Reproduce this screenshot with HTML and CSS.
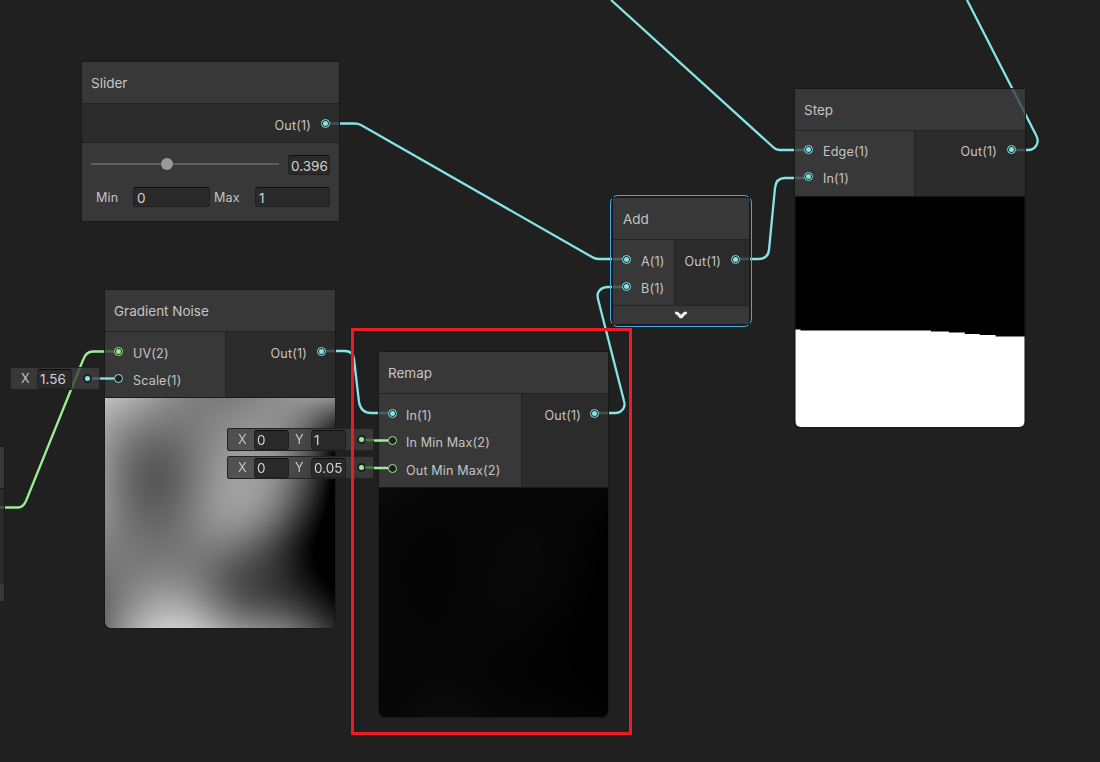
FILE: index.html
```
<!DOCTYPE html>
<html lang="en">
<head>
    <meta charset="UTF-8">
    <title>Shader Graph</title>
    <meta name="viewport" content="width=device-width, initial-scale=1.0">
    <link rel="stylesheet" href="styles.css">
</head>
<body>
    <div class="graph">
        <!-- edges, drawn under the nodes -->
        <svg class="edges" width="1100" height="762">
            <g class="edge">
                <path d="M326 123.500 H355 Q358 123.500 361 125 L592 257 Q595 259 599 259 H627"/>
                <path d="M611 0 L773 147 Q776 150 780 150 H809"/>
                <path d="M735 259 H758 Q768 259 769 250 L775 188 Q776 178 785 178 H809"/>
                <path d="M967 0 L1036 135 C1040 142 1036 150 1028 150 H1011"/>
                <path d="M321 351 H345 Q353 351 354 359 L359 402 Q361 413 371 413 H392"/>
                <path d="M595 413 H615 C622 413 626 407 624 401 L598 299 C596 292 601 287 608 287 H627"/>
            </g>
            <g class="edge green">
                <path d="M0 507.500 H18 Q23 507.500 26 501 L83 360 Q86 351.500 93 351.500 H118"/>
            </g>
        </svg>

        <div class="node node-cut">
            <div class="title"></div>
            <div class="outputs"></div>
            <div class="footer"></div>
        </div>

        <div class="node node-slider">
            <div class="title">Slider</div>
            <div class="ports">
                <div class="outputs">
                    <div class="port">Out(1)<i class="dot on"></i></div>
                </div>
            </div>
            <div class="controls">
                <div class="slider-row">
                    <div class="track"><span class="thumb"></span></div>
                    <div class="field">0.396</div>
                </div>
                <div class="range-row">
                    <label>Min</label><div class="field">0</div>
                    <label>Max</label><div class="field">1</div>
                </div>
            </div>
        </div>

        <div class="node node-noise">
            <div class="title">Gradient Noise</div>
            <div class="ports">
                <div class="inputs">
                    <div class="port"><i class="dot on green"></i>UV(2)</div>
                    <div class="port"><i class="dot"></i>Scale(1)</div>
                </div>
                <div class="outputs">
                    <div class="port">Out(1)<i class="dot on"></i></div>
                </div>
            </div>
            <canvas class="preview" id="noisePreview" width="230" height="230"></canvas>
        </div>

        <div class="node node-remap">
            <div class="title">Remap</div>
            <div class="ports">
                <div class="inputs">
                    <div class="port"><i class="dot on"></i>In(1)</div>
                    <div class="port"><i class="dot green"></i>In Min Max(2)</div>
                    <div class="port"><i class="dot green"></i>Out Min Max(2)</div>
                </div>
                <div class="outputs">
                    <div class="port">Out(1)<i class="dot on"></i></div>
                </div>
            </div>
            <canvas class="preview" id="remapPreview" width="230" height="230"></canvas>
        </div>

        <div class="selection">
            <div class="node node-add">
                <div class="title">Add</div>
                <div class="ports">
                    <div class="inputs">
                        <div class="port"><i class="dot on"></i>A(1)</div>
                        <div class="port"><i class="dot on"></i>B(1)</div>
                    </div>
                    <div class="outputs">
                        <div class="port">Out(1)<i class="dot on"></i></div>
                    </div>
                </div>
                <div class="footer">
                    <svg width="14" height="8" viewBox="0 0 14 8"><path d="M1 0.800 H3.800 L7 3.800 L10.200 0.800 H13 V2.800 L11 4 L8.200 7.200 H5.800 L3 4 L1 2.800 Z"/></svg>
                </div>
            </div>
        </div>

        <div class="node node-step">
            <div class="title">Step</div>
            <div class="ports">
                <div class="inputs">
                    <div class="port"><i class="dot on"></i>Edge(1)</div>
                    <div class="port"><i class="dot on"></i>In(1)</div>
                </div>
                <div class="outputs">
                    <div class="port">Out(1)<i class="dot on"></i></div>
                </div>
            </div>
            <svg class="preview" width="230" height="231" viewBox="0 0 230 231">
                <rect width="230" height="231" fill="#000"/>
                <path fill="#fff" d="M0 133 H5 V134 H136 V135 H154 V136 H170 V137.500 H185 V138.500 H201 V140 H230 V231 H0 Z"/>
            </svg>
        </div>

        <!-- default values for unconnected inputs -->
        <div class="value value-scale">
            <span>X</span><div class="field">1.56</div><i class="pin"></i>
        </div>
        <div class="value value-in">
            <span>X</span><div class="field">0</div><span>Y</span><div class="field">1</div><i class="pin green"></i>
        </div>
        <div class="value value-out">
            <span>X</span><div class="field">0</div><span>Y</span><div class="field">0.05</div><i class="pin green"></i>
        </div>

        <svg class="edges" width="1100" height="762">
            <path class="edge" d="M100 378.500 H114"/>
            <path class="edge dim" d="M92 378.500 H100"/>
            <g class="edge green">
                <path d="M374 440.500 H388 M374 468 H388"/>
                <path class="dim" d="M365 440 H374 M365 467.500 H374"/>
            </g>
        </svg>

        <div class="highlight"></div>
    </div>
    <script>
// coarse noise samples, smoothed to the preview size
const samples = [
    [192, 170, 144, 126, 122, 132, 144, 152, 140],
    [160, 130, 116, 120, 138, 148, 146, 106, 22],
    [146, 98, 86, 116, 150, 162, 150, 92, 0],
    [144, 92, 80, 116, 158, 166, 144, 72, -10],
    [142, 104, 94, 124, 160, 160, 120, 40, -20],
    [130, 116, 110, 124, 134, 110, 64, 4, -30],
    [116, 122, 128, 122, 92, 64, 48, 10, -20],
    [104, 142, 164, 154, 104, 68, 60, 36, 6],
    [110, 172, 208, 204, 164, 136, 130, 96, 40]
];

// uniform B-spline weights
function cubic(a, b, c, d, t) {
    const s = 1 - t;
    return (a * s * s * s + b * (3 * t * t * t - 6 * t * t + 4)
        + c * (3 * s * s * s - 6 * s * s + 4) + d * t * t * t) / 6;
}

// extend past the edges in a straight line
function at(row, i) {
    if (i < 0) return 2 * row[0] - row[1];
    if (i > 8) return 2 * row[8] - row[7];
    return row[i];
}

function noise(u, v) {
    const x = Math.floor(u), y = Math.floor(v);
    const column = samples.map(function(row) {
        return cubic(at(row, x - 1), at(row, x), at(row, x + 1), at(row, x + 2), u - x);
    });
    return cubic(at(column, y - 1), at(column, y), at(column, y + 1), at(column, y + 2), v - y);
}

function drawPreview(id, scale) {
    const ctx = document.getElementById(id).getContext('2d');
    const image = ctx.createImageData(230, 230);
    for (let y = 0; y < 230; y++) {
        for (let x = 0; x < 230; x++) {
            const i = (y * 230 + x) * 4;
            const value = noise(x / 28.75, y / 28.75) * scale;
            image.data[i] = image.data[i + 1] = image.data[i + 2] = value;
            image.data[i + 3] = 255;
        }
    }
    ctx.putImageData(image, 0, 0);
}

drawPreview('noisePreview', 1);
drawPreview('remapPreview', 0.05);
    </script>
</body>
</html>
```

FILE: styles.css
```
* {
    box-sizing: border-box;
}
body {
    margin: 0;
    background: #202020;
    color: #c4c4c4;
    font-family: Inter, "Liberation Sans", sans-serif;
    font-size: 12.6px;
    letter-spacing: 0.15px;
}
.graph {
    position: relative;
    width: 1100px;
    height: 762px;
    overflow: hidden;
}
.edges {
    position: absolute;
    left: 0;
    top: 0;
}
.edge {
    fill: none;
    stroke: #84e4e7;
    stroke-width: 2.3;
}
.edge.green {
    stroke: #9aef92;
}
.dim {
    opacity: 0.3;
}

/* nodes */
.node {
    position: absolute;
    width: 232px;
    border: 1px solid #191919;
}
.title {
    height: 41px;
    padding-left: 9px;
    background: rgba(63, 63, 63, 0.8);
    font-size: 13.5px;
    line-height: 43px;
    letter-spacing: 0;
}
.ports {
    display: flex;
    border-top: 1px solid #232323;
}
.inputs {
    width: 121px;
    padding: 6px 0 4px;
    background: rgba(63, 63, 63, 0.8);
    border-right: 1px solid #232323;
}
.outputs {
    flex: 1;
    padding: 6px 0 4px;
    background: rgba(46, 46, 46, 0.8);
}
.port {
    display: flex;
    align-items: center;
    height: 27.5px;
    padding: 3px 9px 0;
    gap: 10px;
}
.outputs .port {
    justify-content: flex-end;
}
.dot {
    display: flex;
    align-items: center;
    justify-content: center;
    width: 9px;
    height: 9px;
    margin-bottom: 4px;
    border: 1px solid #84e4e7;
    border-radius: 50%;
    background: #202020;
    color: #84e4e7;
    flex: none;
}
.dot.on::after {
    content: "";
    width: 5px;
    height: 5px;
    border-radius: 50%;
    background: currentColor;
}
.dot.green {
    border-color: #9aef92;
    color: #9aef92;
}
.preview {
    display: block;
    border-top: 1px solid #191919;
    border-radius: 0 0 6px 6px;
}
.footer {
    display: flex;
    align-items: center;
    justify-content: center;
    height: 19px;
    background: rgba(63, 63, 63, 0.8);
    border-top: 1px solid #232323;
}
.footer path {
    fill: #eee;
}
.node-cut {
    left: -100px;
    top: 446px;
    width: 105px;
    height: 155px;
}
.node-cut .outputs {
    height: 94px;
    border-top: 1px solid #191919;
}
.node-slider {
    left: 81px;
    top: 61px;
    width: 259px;
}
.node-noise {
    left: 104px;
    top: 289px;
}
.node-remap {
    left: 378px;
    top: 351px;
    width: 231px;
}
.node-remap .inputs {
    width: 143px;
}
.node-remap .port {
    gap: 9px;
}
.node-remap .preview {
    width: 229px;
}
.node-step {
    left: 794px;
    top: 88px;
}
.node-step .title {
    line-height: 42px;
}
.node-step .inputs, .node-step .outputs {
    padding: 5px 0;
}
.node-step .inputs {
    width: 120px;
}
.node-noise, .node-step, .node-remap {
    border-radius: 0 0 6px 6px;
}

/* slider node */
.node-slider .outputs {
    height: 38px;
}
.controls {
    height: 79px;
    padding: 12px 9px 0;
    background: rgba(63, 63, 63, 0.8);
    border-top: 1px solid #232323;
}
.slider-row, .range-row {
    display: flex;
    align-items: center;
}
.track {
    position: relative;
    width: 188px;
    height: 2px;
    margin: 0 9px 3px 0;
    background: #5e5e5e;
}
.thumb {
    position: absolute;
    left: 70px;
    top: -5px;
    width: 12px;
    height: 12px;
    border-radius: 50%;
    background: #999;
}
.field {
    height: 20px;
    padding-left: 3px;
    background: #2a2a2a;
    border: 1px solid #212121;
    border-top-color: #0d0d0d;
    border-radius: 3px;
    color: #d2d2d2;
    font-size: 13.5px;
    line-height: 20px;
    letter-spacing: 0;
    overflow: hidden;
    white-space: nowrap;
}
.slider-row .field {
    width: 42px;
    padding-left: 2px;
}
.range-row {
    margin-top: 12px;
    padding-left: 5px;
}
.range-row label {
    width: 37px;
}
.range-row .field {
    width: 77px;
}
.range-row label:nth-of-type(2) {
    width: 45px;
    padding-left: 4px;
}
.range-row .field:last-child {
    width: 75px;
}

/* selected node */
.selection {
    position: absolute;
    left: 610px;
    top: 195px;
    width: 142px;
    height: 132px;
    padding: 1px;
    border: 1px solid #44a8e0;
    border-radius: 8px;
}
.node-add {
    position: static;
    width: 138px;
}
.node-add .title {
    padding-left: 10px;
}
.node-add .inputs {
    width: 62px;
}

/* inline values */
.value {
    position: absolute;
    display: flex;
    align-items: center;
    height: 23px;
    padding: 0 7px 0 10px;
    background: rgba(63, 63, 63, 0.8);
    border: 1px solid #222;
    border-radius: 2px;
}
.value span {
    width: 16px;
}
.value .field {
    width: 35px;
    padding-left: 2px;
    line-height: 18px;
}
.pin {
    width: 9px;
    height: 9px;
    margin-left: auto;
    border: 2px solid #202020;
    border-radius: 50%;
    background: #84e4e7;
}
.pin.green {
    background: #9aef92;
}
.value-scale {
    left: 10px;
    top: 367px;
    width: 90px;
}
.value-in {
    left: 227px;
    top: 428px;
    width: 147px;
}
.value-out {
    left: 227px;
    top: 456px;
    width: 147px;
}
.value .field + span {
    margin-left: 6px;
}

.highlight {
    position: absolute;
    left: 351px;
    top: 328px;
    width: 281px;
    height: 407px;
    border: 3px solid #ed1c24;
}
```
